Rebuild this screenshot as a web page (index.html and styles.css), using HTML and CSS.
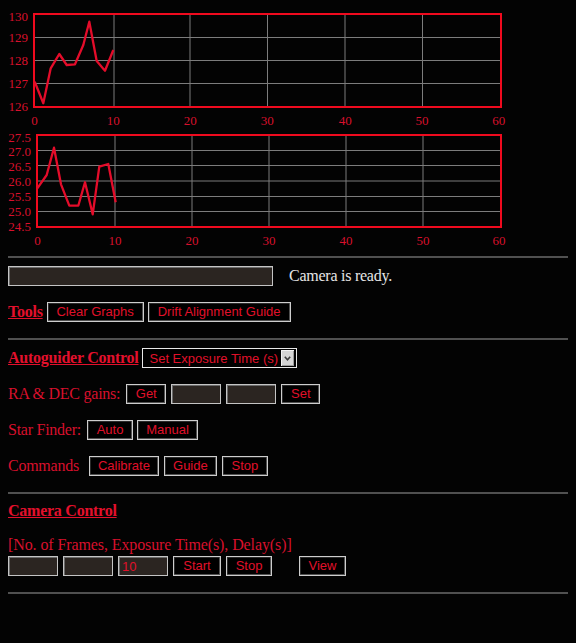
FILE: index.html
```html
<!DOCTYPE html>
<html lang="en">
<head>
<meta charset="utf-8">
<title>Autoguider</title>
<link rel="stylesheet" href="styles.css">
</head>
<body>
<svg class="chart" width="560" height="120" viewBox="0 0 560 120">
  <g class="grid">
    <line x1="106" y1="6" x2="106" y2="99"/>
    <line x1="182" y1="6" x2="182" y2="99"/>
    <line x1="259.5" y1="6" x2="259.5" y2="99"/>
    <line x1="337" y1="6" x2="337" y2="99"/>
    <line x1="414.5" y1="6" x2="414.5" y2="99"/>
    <line x1="26" y1="29.5" x2="493" y2="29.5"/>
    <line x1="26" y1="52.5" x2="493" y2="52.5"/>
    <line x1="26" y1="75.5" x2="493" y2="75.5"/>
  </g>
  <rect class="frame" x="26" y="6" width="467" height="93"/>
  <polyline class="series" points="26.7,73.7 35.3,95.3 42.7,60.3 51.3,46 58.7,57 67,56.3 75.3,37 81.3,13.7 88.7,53 97,62.7 105.3,42"/>
  <g class="ylabels">
    <text x="20" y="12.7">130</text>
    <text x="20" y="33.7">129</text>
    <text x="20" y="57">128</text>
    <text x="20" y="80.2">127</text>
    <text x="20" y="103">126</text>
  </g>
  <g class="xlabels">
    <text x="26.5" y="117">0</text>
    <text x="105.3" y="117">10</text>
    <text x="182.3" y="117">20</text>
    <text x="259.3" y="117">30</text>
    <text x="337.3" y="117">40</text>
    <text x="414" y="117">50</text>
    <text x="490.7" y="117">60</text>
  </g>
</svg>
<svg class="chart" width="560" height="120" viewBox="0 0 560 120">
  <g class="grid">
    <line x1="107" y1="7" x2="107" y2="99"/>
    <line x1="184" y1="7" x2="184" y2="99"/>
    <line x1="261" y1="7" x2="261" y2="99"/>
    <line x1="338" y1="7" x2="338" y2="99"/>
    <line x1="415" y1="7" x2="415" y2="99"/>
    <line x1="29" y1="22.5" x2="493" y2="22.5"/>
    <line x1="29" y1="37.5" x2="493" y2="37.5"/>
    <line x1="29" y1="53" x2="493" y2="53"/>
    <line x1="29" y1="68.5" x2="493" y2="68.5"/>
    <line x1="29" y1="83.5" x2="493" y2="83.5"/>
  </g>
  <rect class="frame" x="29" y="7" width="464" height="92"/>
  <polyline class="series" points="29.3,60.3 38.7,47 46,19.7 53,56.3 61.3,77.7 70.3,77.7 77,54.3 84.7,86.3 91.3,38.7 100.3,36 107.7,74.3"/>
  <g class="ylabels">
    <text x="23" y="13.7">27.5</text>
    <text x="23" y="27.7">27.0</text>
    <text x="23" y="43">26.5</text>
    <text x="23" y="57.7">26.0</text>
    <text x="23" y="73.2">25.5</text>
    <text x="23" y="88">25.0</text>
    <text x="23" y="103">24.5</text>
  </g>
  <g class="xlabels">
    <text x="29.5" y="117">0</text>
    <text x="107" y="117">10</text>
    <text x="184" y="117">20</text>
    <text x="261" y="117">30</text>
    <text x="338" y="117">40</text>
    <text x="415" y="117">50</text>
    <text x="491" y="117">60</text>
  </g>
</svg>

<hr class="rule">

<div class="row">
  <input class="field field-status" type="text" readonly>
  <span class="status">Camera is ready.</span>
</div>

<p class="row para">
  <a class="heading" href="#">Tools</a>
  <button class="btn w-clear">Clear Graphs</button>
  <button class="btn w-drift">Drift Alignment Guide</button>
</p>

<hr class="rule">

<div class="row">
  <a class="heading" href="#">Autoguider Control</a>
  <span class="select">
    <select class="select-input"><option>Set Exposure Time (s)</option></select>
    <span class="select-arrow"><svg width="7" height="5" viewBox="0 0 7 5"><path d="M0.8 0.8 L3.5 3.8 L6.2 0.8"/></svg></span>
  </span>
</div>

<p class="row para gap5">
  <span class="label">RA &amp; DEC gains:</span>
  <button class="btn w-get lead1">Get</button>
  <input class="field" type="text">
  <input class="field" type="text">
  <button class="btn w-set">Set</button>
</p>

<p class="row para">
  <span class="label">Star Finder:</span>
  <button class="btn w-auto lead2">Auto</button>
  <button class="btn w-manual">Manual</button>
</p>

<p class="row para gap5">
  <span class="label">Commands</span>
  <button class="btn w-calibrate lead5">Calibrate</button>
  <button class="btn w-guide">Guide</button>
  <button class="btn w-stop">Stop</button>
</p>

<hr class="rule">

<div class="title-line"><a class="heading" href="#">Camera Control</a></div>

<div class="para">
  <div class="caption">[No. of Frames, Exposure Time(s), Delay(s)]</div>
  <div class="row gap5 frames-row">
    <input class="field" type="text">
    <input class="field" type="text">
    <input class="field" type="text" value="10">
    <button class="btn w-start">Start</button>
    <button class="btn w-stop">Stop</button>
    <button class="btn w-view lead-view">View</button>
  </div>
</div>

<hr class="rule">
</body>
</html>
```

FILE: styles.css
```css
html {
  background: #030303;
}

body {
  margin: 8px;
  background: #030303;
  color: #d8102c;
  font-family: "Liberation Serif", "Times New Roman", serif;
  font-size: 16px;
  line-height: 18px;
  letter-spacing: -0.25px;
}

/* charts */
.chart {
  display: block;
  overflow: visible;
}

.chart text {
  font-family: "Liberation Serif", "Times New Roman", serif;
  font-size: 13px;
  letter-spacing: 0;
  fill: #d8102c;
}

.chart .ylabels text {
  text-anchor: end;
}

.chart .xlabels text {
  text-anchor: middle;
}

.chart .grid line {
  stroke: #7c7c7c;
  stroke-width: 1;
}

.chart .frame {
  fill: none;
  stroke: #f00a1e;
  stroke-width: 2;
}

.chart .series {
  fill: none;
  stroke: #e40c2a;
  stroke-width: 2.3;
  stroke-linejoin: round;
}

/* separators */
.rule {
  margin: 8px 0;
  border: 0;
  height: 2px;
  background: #505050;
}

/* rows */
.row {
  display: flex;
  align-items: center;
  gap: 4px;
  height: 20px;
  margin: 0;
}

.gap5 {
  gap: 5px;
}

.para {
  margin: 16px 0;
}

.title-line {
  height: 18px;
}

.caption {
  height: 18px;
  letter-spacing: -0.1px;
}

.frames-row {
  margin-top: 2px;
}

.heading {
  font-weight: bold;
  color: #e3102c;
  text-decoration: underline;
  letter-spacing: -0.25px;
}

.label {
  color: #d8102c;
}

.status {
  margin-left: 12px;
  color: #e6e6e6;
}

/* controls */
.btn {
  box-sizing: border-box;
  height: 20px;
  padding: 0;
  font-family: "Liberation Sans", Arial, sans-serif;
  font-size: 13px;
  line-height: 16px;
  letter-spacing: 0;
  color: #e0102a;
  background: #000;
  border: 1px solid #cdcdcd;
  box-shadow: inset -1px -1px 0 #505050, inset 1px 1px 0 #2a2a2a;
  text-align: center;
}

.field {
  box-sizing: border-box;
  width: 50px;
  height: 20px;
  margin: 0;
  padding: 0 3px;
  font-family: "Liberation Sans", Arial, sans-serif;
  font-size: 13px;
  letter-spacing: 0;
  color: #e0102a;
  background: #2b2521;
  border: 1px solid #c4c4c4;
  box-shadow: inset 1px 1px 0 #6a6a6a;
  outline: none;
}

.field-status {
  width: 265px;
}

.w-clear { width: 97px; }
.w-drift { width: 143px; }
.w-get { width: 40px; }
.w-set { width: 39px; }
.w-auto { width: 46px; }
.w-manual { width: 61px; }
.w-calibrate { width: 70px; }
.w-guide { width: 53px; }
.w-stop { width: 46px; }
.w-start { width: 48px; }
.w-view { width: 47px; }

.lead1 { margin-left: 1px; }
.lead2 { margin-left: 2px; }
.lead5 { margin-left: 5px; }
.lead-view { margin-left: 22px; }

/* select */
.select {
  box-sizing: border-box;
  display: flex;
  width: 155px;
  height: 20px;
  padding: 1px 2px 1px 1px;
  background: #000;
  border: 1px solid #e8e8e8;
}

.select-input {
  appearance: none;
  -webkit-appearance: none;
  flex: 1;
  min-width: 0;
  margin: 0;
  padding: 0 0 0 5px;
  border: 0;
  outline: none;
  background: #000;
  color: #e0102a;
  font-family: "Liberation Sans", Arial, sans-serif;
  font-size: 13px;
  letter-spacing: 0;
}

.select-arrow {
  display: flex;
  align-items: center;
  justify-content: center;
  width: 13px;
  background: #d4d4d4;
  box-shadow: inset 1px 1px 0 #f2f2f2, inset -1px -1px 0 #9a9a9a;
}

.select-arrow path {
  fill: none;
  stroke: #3c3c3c;
  stroke-width: 1.6;
}
```
